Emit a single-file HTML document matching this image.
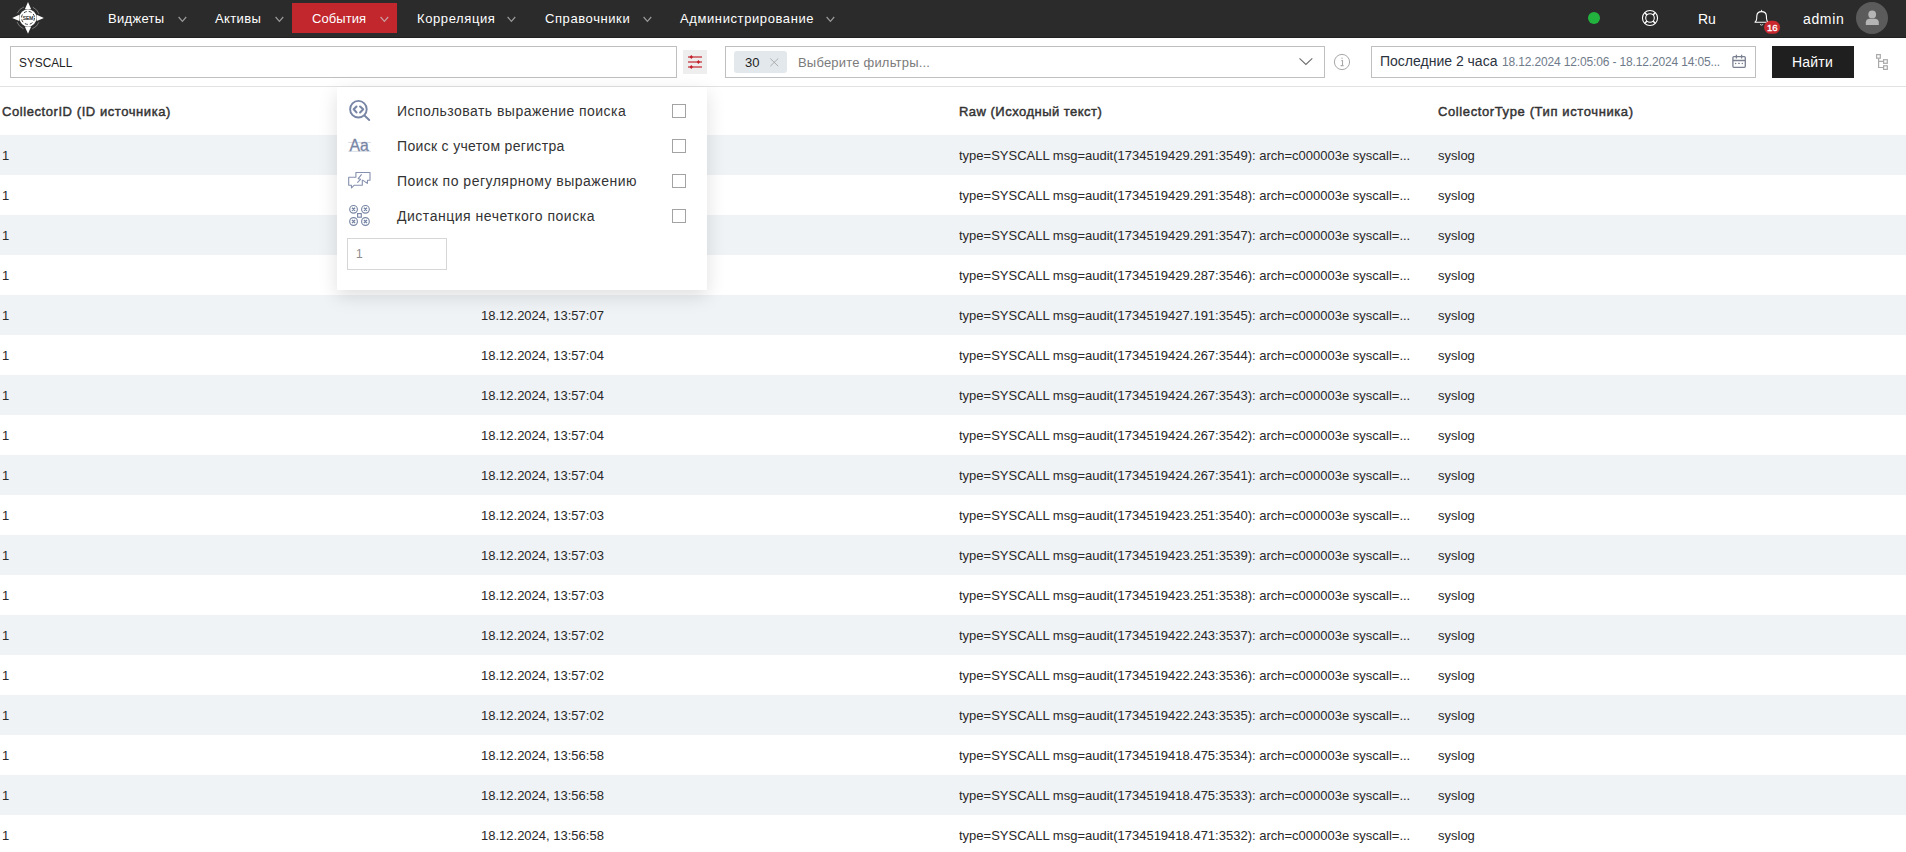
<!DOCTYPE html>
<html><head><meta charset="utf-8">
<style>
*{box-sizing:border-box;margin:0;padding:0}
html,body{width:1906px;height:852px;overflow:hidden;background:#fff;font-family:"Liberation Sans",sans-serif;color:#333}
.a{position:absolute}
.t{position:absolute;white-space:nowrap;line-height:16px}
#top{position:absolute;left:0;top:0;width:1906px;height:38px;background:#2b2b2b;border-bottom:1px solid #202020}
.nav{color:#fff;font-size:13px;top:11px}
.chev{position:absolute;top:16px;width:9px;height:7px}
#rows .r{position:absolute;left:0;width:1906px;height:40px}
#rows .s{background:#f0f3f6}
.c{position:absolute;white-space:nowrap;font-size:13px;line-height:16px;top:13px;color:#282828}
.hd{font-weight:normal;font-size:13px;color:#333;-webkit-text-stroke:0.45px #333}
#pop{position:absolute;left:337px;top:87px;width:370px;height:203px;background:#fff;box-shadow:0 6px 18px rgba(0,0,0,0.13)}
.pt{position:absolute;left:60px;font-size:14px;color:#333;white-space:nowrap;line-height:16px}
.cb{position:absolute;left:335px;width:14px;height:14px;border:1px solid #a3a3a3;background:#fff}
</style></head><body>
<div id="top">
  <svg class="a" style="left:10px;top:0" width="36" height="36" viewBox="0 0 36 36">
    <g fill="#fff">
      <path d="M18 2 L21.2 9.2 L14.8 9.2 Z"/><path d="M18 33.8 L21.2 26.6 L14.8 26.6 Z"/>
      <path d="M2.2 17.9 L9.3 14.7 L9.3 21.1 Z"/><path d="M33.9 17.9 L26.7 14.7 L26.7 21.1 Z"/>
      <circle cx="18" cy="17.9" r="8.6"/>
    </g>
    <circle cx="18" cy="17.9" r="6.5" fill="none" stroke="#2b2b2b" stroke-width="0.9" stroke-dasharray="3 2.1"/>
    
    <text x="18" y="19.5" font-size="4.8" text-anchor="middle" fill="#2b2b2b" stroke="#2b2b2b" stroke-width="0.2" font-family="Liberation Sans">SEM</text>
    <circle cx="18" cy="17.9" r="11.7" fill="none" stroke="#8a8a8a" stroke-width="0.8" stroke-dasharray="9.4 9" stroke-dashoffset="13.9"/>
  </svg>
  <div class="t nav" style="left:108px;letter-spacing:0.3px">Виджеты</div>
  <svg class="chev" style="left:178px" viewBox="0 0 9 7"><path d="M0.6 1 L4.4 5.3 L8.2 1" fill="none" stroke="#9b9b9b" stroke-width="1.2"/></svg>
  <div class="t nav" style="left:215px;letter-spacing:0.37px">Активы</div>
  <svg class="chev" style="left:275px" viewBox="0 0 9 7"><path d="M0.6 1 L4.4 5.3 L8.2 1" fill="none" stroke="#9b9b9b" stroke-width="1.2"/></svg>
  <div class="a" style="left:292px;top:3px;width:105px;height:30px;background:#c1272d"></div>
  <div class="t nav" style="left:312px;letter-spacing:0.06px">События</div>
  <svg class="chev" style="left:380px" viewBox="0 0 9 7"><path d="M0.6 1 L4.4 5.3 L8.2 1" fill="none" stroke="#c9a0a2" stroke-width="1.2"/></svg>
  <div class="t nav" style="left:417px;letter-spacing:0.6px">Корреляция</div>
  <svg class="chev" style="left:507px" viewBox="0 0 9 7"><path d="M0.6 1 L4.4 5.3 L8.2 1" fill="none" stroke="#9b9b9b" stroke-width="1.2"/></svg>
  <div class="t nav" style="left:545px;letter-spacing:0.59px">Справочники</div>
  <svg class="chev" style="left:643px" viewBox="0 0 9 7"><path d="M0.6 1 L4.4 5.3 L8.2 1" fill="none" stroke="#9b9b9b" stroke-width="1.2"/></svg>
  <div class="t nav" style="left:680px;letter-spacing:0.6px">Администрирование</div>
  <svg class="chev" style="left:826px" viewBox="0 0 9 7"><path d="M0.6 1 L4.4 5.3 L8.2 1" fill="none" stroke="#9b9b9b" stroke-width="1.2"/></svg>

  <div class="a" style="left:1588px;top:12px;width:12px;height:12px;border-radius:50%;background:#22b33f"></div>
  <svg class="a" style="left:1638px;top:6px" width="24" height="24" viewBox="0 0 24 24">
    <g fill="none" stroke="#fff">
      <circle cx="12" cy="12" r="7.55" stroke-width="1.1"/>
      <circle cx="12" cy="12" r="4.3" stroke-width="1.1"/>
      <path d="M6.8 6.8 L9 9 M17.2 6.8 L15 9 M6.8 17.2 L9 15 M17.2 17.2 L15 15" stroke-width="1.6"/>
    </g>
  </svg>
  <div class="t" style="left:1698px;top:11px;font-size:14px;color:#fff">Ru</div>
  <svg class="a" style="left:1750px;top:6px" width="34" height="30" viewBox="0 0 34 30">
    <path d="M5 16.2 L18.2 16.2 C17 15.2 16.6 14.2 16.5 12.5 L16.4 10 C16.3 7.3 14.5 5.6 11.6 5.6 C8.7 5.6 6.9 7.3 6.8 10 L6.7 12.5 C6.6 14.2 6.2 15.2 5 16.2 Z" fill="none" stroke="#fff" stroke-width="1.1" stroke-linejoin="round"/>
    <path d="M10.8 5.2 L11.6 3.4 L12.4 5.2 Z" fill="#fff"/>
    <path d="M10 18.4 Q11.6 19.9 13.2 18.4" fill="none" stroke="#ddd" stroke-width="0.9"/>
    <rect x="14.1" y="14.8" width="16" height="13" rx="6.5" fill="#c8282e"/>
    <text x="22.3" y="24.8" font-size="9.6" text-anchor="middle" fill="#fff" stroke="#fff" stroke-width="0.35" font-family="Liberation Sans">16</text>
  </svg>
  <div class="t" style="left:1803px;top:11px;font-size:14px;color:#fff;letter-spacing:0.64px">admin</div>
  <div class="a" style="left:1856px;top:2px;width:32px;height:32px;border-radius:50%;background:#5b5b5b"></div>
  <svg class="a" style="left:1856px;top:2px" width="32" height="32" viewBox="0 0 32 32">
    <circle cx="16.2" cy="12.4" r="3.9" fill="#b5b5b5"/>
    <path d="M9.8 23 L9.8 20.5 C9.8 17.8 12 16.8 13.5 16.8 L18.9 16.8 C20.4 16.8 22.8 17.8 22.8 20.5 L22.8 23 Z" fill="#b5b5b5"/>
  </svg>
</div>

<!-- toolbar -->
<div class="a" style="left:10px;top:46px;width:667px;height:32px;border:1px solid #bfbfbf"></div>
<div class="t" style="left:19px;top:55px;font-size:13px;color:#222;transform:scaleX(0.91);transform-origin:0 0">SYSCALL</div>
<div class="a" style="left:683px;top:50px;width:24px;height:24px;background:#eeeeee"></div>
<svg class="a" style="left:683px;top:50px" width="24" height="24" viewBox="0 0 24 24">
  <g stroke="#d5787e" stroke-width="2"><path d="M5 7 H19 M5 12 H19 M5 17 H19"/></g>
  <g fill="#c41e2a"><path d="M8.3 5 L10 7 L8.3 9 L6.6 7 Z"/><path d="M15.4 10 L17.1 12 L15.4 14 L13.7 12 Z"/><path d="M8.3 15 L10 17 L8.3 19 L6.6 17 Z"/></g>
</svg>
<div class="a" style="left:725px;top:46px;width:600px;height:32px;border:1px solid #bfbfbf"></div>
<svg class="a" style="left:1298px;top:56px" width="16" height="10" viewBox="0 0 16 10"><path d="M1.5 2.3 L7.9 8.5 L14.3 2.3" fill="none" stroke="#6d6d6d" stroke-width="1.1"/></svg>
<svg class="a" style="left:1332px;top:52px" width="20" height="20" viewBox="0 0 20 20">
  <circle cx="10" cy="10" r="7.6" fill="none" stroke="#a8a8a8" stroke-width="1"/>
  <circle cx="10" cy="6.3" r="0.8" fill="#bbb"/>
  <path d="M9.4 8.6 H10.5 V13.3 M8.6 13.6 H11.6" fill="none" stroke="#a8a8a8" stroke-width="1.1"/>
</svg>
<div class="a" style="left:734px;top:51px;width:53px;height:22px;background:#e3e8ec;border-radius:3px"></div>
<div class="t" style="left:745px;top:55px;font-size:13px;color:#222">30</div>
<svg class="a" style="left:769px;top:57px" width="11" height="11" viewBox="0 0 11 11"><path d="M1.3 1.5 L9.2 9.2 M9.2 1.5 L1.3 9.2" stroke="#a6a6a6" stroke-width="0.9"/></svg>
<div class="t" style="left:798px;top:55px;font-size:13px;color:#7b7b7b;letter-spacing:0.2px">Выберите фильтры...</div>
<div class="a" style="left:1371px;top:46px;width:385px;height:32px;border:1px solid #bfbfbf"></div>
<svg class="a" style="left:1728px;top:50px" width="22" height="22" viewBox="0 0 22 22">
  <g fill="none" stroke="#7a8090" stroke-width="1.3"><rect x="4.9" y="6.7" width="12.4" height="10.6" rx="1"/><path d="M4.9 10.5 H17.3 M8.4 4.8 V8.5 M13.6 4.8 V8.5"/></g>
  <g fill="#7a8090"><circle cx="7.6" cy="13.4" r="0.75"/><circle cx="14.3" cy="13.4" r="0.75"/><rect x="10.2" y="12.8" width="1.6" height="1.2"/></g>
</svg>
<div class="t" style="left:1380px;top:53px;font-size:14px;color:#2b3340">Последние 2 часа</div>
<div class="t" style="left:1502px;top:54px;font-size:12px;color:#6f7b8a;letter-spacing:-0.15px">18.12.2024 12:05:06 - 18.12.2024 14:05...</div>
<div class="a" style="left:1772px;top:46px;width:82px;height:32px;background:#1f1f1f"></div>
<div class="t" style="left:1792px;top:54px;font-size:14px;color:#fff;letter-spacing:0.2px">Найти</div>
<svg class="a" style="left:1870px;top:50px" width="24" height="24" viewBox="0 0 24 24">
  <g fill="none" stroke="#a9a9a9" stroke-width="1.2"><rect x="6.6" y="4.6" width="3.7" height="3.6"/><rect x="13.6" y="9.7" width="3.7" height="3.6"/><rect x="13.6" y="15.8" width="3.7" height="3.6"/><path d="M8.6 8.2 V17.5 H13.6 M8.6 11.4 H13.6"/></g>
</svg>
<div class="a" style="left:0;top:86px;width:1906px;height:1px;background:#e2e2e2"></div>

<!-- header -->
<div class="t hd" style="left:2px;top:104px;letter-spacing:0.57px">CollectorID (ID источника)</div>
<div class="t hd" style="left:959px;top:104px;letter-spacing:0.48px">Raw (Исходный текст)</div>
<div class="t hd" style="left:1438px;top:104px;letter-spacing:0.61px">CollectorType (Тип источника)</div>

<div id="rows">
<div class="r s" style="top:135px"><div class="c" style="left:2px">1</div><div class="c" style="left:481px">18.12.2024, 13:57:10</div><div class="c" style="left:959px">type=SYSCALL msg=audit(1734519429.291:3549): arch=c000003e syscall=...</div><div class="c" style="left:1438px">syslog</div></div>
<div class="r" style="top:175px"><div class="c" style="left:2px">1</div><div class="c" style="left:481px">18.12.2024, 13:57:10</div><div class="c" style="left:959px">type=SYSCALL msg=audit(1734519429.291:3548): arch=c000003e syscall=...</div><div class="c" style="left:1438px">syslog</div></div>
<div class="r s" style="top:215px"><div class="c" style="left:2px">1</div><div class="c" style="left:481px">18.12.2024, 13:57:10</div><div class="c" style="left:959px">type=SYSCALL msg=audit(1734519429.291:3547): arch=c000003e syscall=...</div><div class="c" style="left:1438px">syslog</div></div>
<div class="r" style="top:255px"><div class="c" style="left:2px">1</div><div class="c" style="left:481px">18.12.2024, 13:57:10</div><div class="c" style="left:959px">type=SYSCALL msg=audit(1734519429.287:3546): arch=c000003e syscall=...</div><div class="c" style="left:1438px">syslog</div></div>
<div class="r s" style="top:295px"><div class="c" style="left:2px">1</div><div class="c" style="left:481px">18.12.2024, 13:57:07</div><div class="c" style="left:959px">type=SYSCALL msg=audit(1734519427.191:3545): arch=c000003e syscall=...</div><div class="c" style="left:1438px">syslog</div></div>
<div class="r" style="top:335px"><div class="c" style="left:2px">1</div><div class="c" style="left:481px">18.12.2024, 13:57:04</div><div class="c" style="left:959px">type=SYSCALL msg=audit(1734519424.267:3544): arch=c000003e syscall=...</div><div class="c" style="left:1438px">syslog</div></div>
<div class="r s" style="top:375px"><div class="c" style="left:2px">1</div><div class="c" style="left:481px">18.12.2024, 13:57:04</div><div class="c" style="left:959px">type=SYSCALL msg=audit(1734519424.267:3543): arch=c000003e syscall=...</div><div class="c" style="left:1438px">syslog</div></div>
<div class="r" style="top:415px"><div class="c" style="left:2px">1</div><div class="c" style="left:481px">18.12.2024, 13:57:04</div><div class="c" style="left:959px">type=SYSCALL msg=audit(1734519424.267:3542): arch=c000003e syscall=...</div><div class="c" style="left:1438px">syslog</div></div>
<div class="r s" style="top:455px"><div class="c" style="left:2px">1</div><div class="c" style="left:481px">18.12.2024, 13:57:04</div><div class="c" style="left:959px">type=SYSCALL msg=audit(1734519424.267:3541): arch=c000003e syscall=...</div><div class="c" style="left:1438px">syslog</div></div>
<div class="r" style="top:495px"><div class="c" style="left:2px">1</div><div class="c" style="left:481px">18.12.2024, 13:57:03</div><div class="c" style="left:959px">type=SYSCALL msg=audit(1734519423.251:3540): arch=c000003e syscall=...</div><div class="c" style="left:1438px">syslog</div></div>
<div class="r s" style="top:535px"><div class="c" style="left:2px">1</div><div class="c" style="left:481px">18.12.2024, 13:57:03</div><div class="c" style="left:959px">type=SYSCALL msg=audit(1734519423.251:3539): arch=c000003e syscall=...</div><div class="c" style="left:1438px">syslog</div></div>
<div class="r" style="top:575px"><div class="c" style="left:2px">1</div><div class="c" style="left:481px">18.12.2024, 13:57:03</div><div class="c" style="left:959px">type=SYSCALL msg=audit(1734519423.251:3538): arch=c000003e syscall=...</div><div class="c" style="left:1438px">syslog</div></div>
<div class="r s" style="top:615px"><div class="c" style="left:2px">1</div><div class="c" style="left:481px">18.12.2024, 13:57:02</div><div class="c" style="left:959px">type=SYSCALL msg=audit(1734519422.243:3537): arch=c000003e syscall=...</div><div class="c" style="left:1438px">syslog</div></div>
<div class="r" style="top:655px"><div class="c" style="left:2px">1</div><div class="c" style="left:481px">18.12.2024, 13:57:02</div><div class="c" style="left:959px">type=SYSCALL msg=audit(1734519422.243:3536): arch=c000003e syscall=...</div><div class="c" style="left:1438px">syslog</div></div>
<div class="r s" style="top:695px"><div class="c" style="left:2px">1</div><div class="c" style="left:481px">18.12.2024, 13:57:02</div><div class="c" style="left:959px">type=SYSCALL msg=audit(1734519422.243:3535): arch=c000003e syscall=...</div><div class="c" style="left:1438px">syslog</div></div>
<div class="r" style="top:735px"><div class="c" style="left:2px">1</div><div class="c" style="left:481px">18.12.2024, 13:56:58</div><div class="c" style="left:959px">type=SYSCALL msg=audit(1734519418.475:3534): arch=c000003e syscall=...</div><div class="c" style="left:1438px">syslog</div></div>
<div class="r s" style="top:775px"><div class="c" style="left:2px">1</div><div class="c" style="left:481px">18.12.2024, 13:56:58</div><div class="c" style="left:959px">type=SYSCALL msg=audit(1734519418.475:3533): arch=c000003e syscall=...</div><div class="c" style="left:1438px">syslog</div></div>
<div class="r" style="top:815px"><div class="c" style="left:2px">1</div><div class="c" style="left:481px">18.12.2024, 13:56:58</div><div class="c" style="left:959px">type=SYSCALL msg=audit(1734519418.471:3532): arch=c000003e syscall=...</div><div class="c" style="left:1438px">syslog</div></div>
</div>

<div id="pop">
  <svg class="a" style="left:8px;top:10px" width="30" height="28" viewBox="0 0 30 28">
    <g fill="none" stroke="#7886a6" stroke-width="1.9" stroke-linecap="round" stroke-linejoin="round">
      <circle cx="13.4" cy="12.2" r="8.3"/><path d="M19.7 18.7 L24.2 23"/><path d="M11.5 9.5 L8.7 12.3 L11.5 15.4 M15.1 9.5 L18.2 12.3 L15.1 15.4" stroke-width="2.1"/>
    </g>
  </svg>
  <svg class="a" style="left:8px;top:47px" width="30" height="24" viewBox="0 0 30 24">
    <path d="M3.1 8.45 H25.9 M3.1 17.3 H25.9" stroke="#d8dce5" stroke-width="1"/>
    <text x="4.6" y="17.3" font-size="16.5" fill="#7886a6" stroke="#7886a6" stroke-width="0.3" font-family="Liberation Sans" textLength="19.3" lengthAdjust="spacingAndGlyphs">Aa</text>
  </svg>
  <svg class="a" style="left:8px;top:81px" width="30" height="24" viewBox="0 0 30 24">
    <g fill="none" stroke="#8591ae" stroke-width="1.1" stroke-linejoin="round">
      <path d="M3.7 9.2 L10.9 9.2 L10.9 4.5 L25 4.5 L25 12.2 L22.5 12.2 L22.3 15.4 L18 12.4 L17.3 12.4 L17.3 17.2 L9.3 17.2 L6.5 19.9 L6.4 17.2 L3.7 17.2 Z"/>
      <path d="M16.6 6.3 L13.2 10.6 L15.6 11.3 L12.3 14.6"/>
    </g>
  </svg>
  <svg class="a" style="left:8px;top:115px" width="30" height="28" viewBox="0 0 30 28">
    <g fill="none" stroke="#7886a6" stroke-width="1.15">
      <circle cx="8.55" cy="7.3" r="3.85"/><circle cx="20.45" cy="7.3" r="3.85"/><circle cx="8.55" cy="19.5" r="3.85"/><circle cx="20.45" cy="19.5" r="3.85"/>
      <rect x="12.6" y="11.6" width="3.7" height="3.6"/>
      <path d="M7.05 5.8 L10.05 8.8 M10.05 5.8 L7.05 8.8 M18.95 5.8 L21.95 8.8 M21.95 5.8 L18.95 8.8 M7.05 18 L10.05 21 M10.05 18 L7.05 21 M18.95 18 L21.95 21 M21.95 18 L18.95 21" stroke-width="1.4"/>
    </g>
  </svg>
  <div class="pt" style="top:16px;letter-spacing:0.46px">Использовать выражение поиска</div>
  <div class="pt" style="top:51px;letter-spacing:0.32px">Поиск с учетом регистра</div>
  <div class="pt" style="top:86px;letter-spacing:0.49px">Поиск по регулярному выражению</div>
  <div class="pt" style="top:121px;letter-spacing:0.52px">Дистанция нечеткого поиска</div>
  <div class="cb" style="top:17px"></div>
  <div class="cb" style="top:52px"></div>
  <div class="cb" style="top:87px"></div>
  <div class="cb" style="top:122px"></div>
  <div class="a" style="left:10px;top:151px;width:100px;height:32px;border:1px solid #d6d6d6"></div>
  <div class="t" style="left:19px;top:159px;font-size:12px;color:#8c8c8c">1</div>
</div>
</body></html>
